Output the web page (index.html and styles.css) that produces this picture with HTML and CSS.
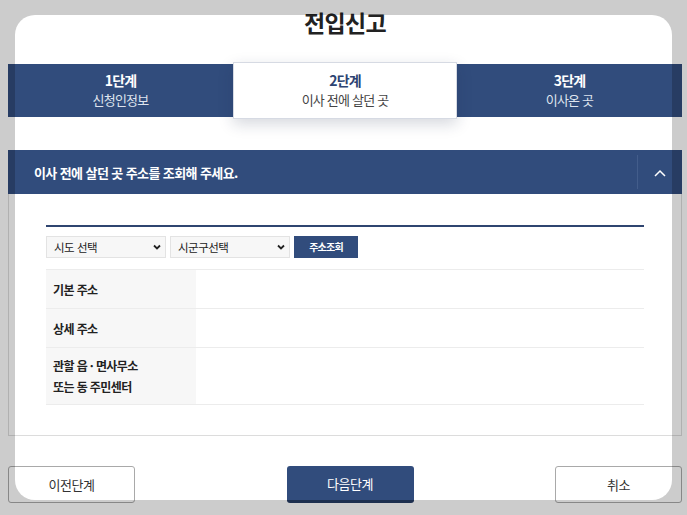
FILE: index.html
```html
<!DOCTYPE html>
<html lang="ko">
<head>
<meta charset="utf-8">
<title>전입신고</title>
<link rel="stylesheet" href="styles.css">
</head>
<body>
<div class="page">
  <h1 class="title">전입신고</h1>
  <ol class="steps">
    <li class="step"><strong>1단계</strong><span>신청인정보</span></li>
    <li class="step active"><strong>2단계</strong><span>이사 전에 살던 곳</span></li>
    <li class="step"><strong>3단계</strong><span>이사온 곳</span></li>
  </ol>
  <section class="panel">
    <div class="panel-head">
      <h2>이사 전에 살던 곳 주소를 조회해 주세요.</h2>
      <button class="toggle" type="button" aria-label="접기">
        <svg width="12" height="8" viewBox="0 0 12 8"><path d="M1 7 L6 2 L11 7" fill="none" stroke="#fff" stroke-width="1.5"/></svg>
      </button>
    </div>
    <div class="panel-body">
      <div class="search">
        <div class="select sido"><span>시도 선택</span><svg width="8" height="6" viewBox="0 0 8 6"><path d="M1 1.5 L4 4.5 L7 1.5" fill="none" stroke="#222" stroke-width="1.8"/></svg></div>
        <div class="select sigungu"><span>시군구선택</span><svg width="8" height="6" viewBox="0 0 8 6"><path d="M1 1.5 L4 4.5 L7 1.5" fill="none" stroke="#222" stroke-width="1.8"/></svg></div>
        <button class="btn-search" type="button">주소조회</button>
      </div>
      <div class="table">
        <div class="row r1"><div class="th">기본 주소</div><div class="td"></div></div>
        <div class="row r2"><div class="th">상세 주소</div><div class="td"></div></div>
        <div class="row r3"><div class="th">관할 읍 · 면사무소<br>또는 동 주민센터</div><div class="td"></div></div>
      </div>
    </div>
  </section>
  <div class="actions">
    <button class="btn btn-line" type="button">이전단계</button>
    <button class="btn btn-primary" type="button">다음단계</button>
    <button class="btn btn-line" type="button">취소</button>
  </div>
</div>
<div class="dim" aria-hidden="true"></div>
</body>
</html>
```
FILE: styles.css
```css
* { box-sizing: border-box; }
html, body { margin: 0; padding: 0; height: 100%; overflow: hidden; background: #fff; }
body {
  font-family: "Noto Sans CJK KR", "Noto Sans", sans-serif;
  color: #222;
  position: relative;
}
.page {
  width: 674px;
  margin-left: 8px;
}
.title {
  margin: 0;
  height: 64px;
  line-height: 45px;
  text-align: center;
  font-size: 23px;
  font-weight: 700;
  letter-spacing: -0.6px;
  color: #222;
}
.steps {
  list-style: none;
  margin: 0 0 33px;
  padding: 0;
  display: grid;
  grid-template-columns: 225px 224px 225px;
  height: 53px;
  background: #314c7c;
}
.step {
  display: flex;
  flex-direction: column;
  justify-content: center;
  align-items: center;
  color: #fff;
  letter-spacing: -0.8px;
  padding-bottom: 2px;
}
.step strong { font-size: 14px; font-weight: 700; line-height: 20px; }
.step span { font-size: 13px; line-height: 19px; color: #dfe4ee; }
.step.active {
  background: #fff;
  margin: -2px 0;
  border: 1px solid #d6dae3;
  box-shadow: 0 5px 14px rgba(30, 40, 70, 0.18);
  position: relative;
  z-index: 1;
}
.step.active strong { color: #2c4372; }
.step.active span { color: #444; }

.panel-head {
  height: 44px;
  background: #314c7c;
  display: flex;
  align-items: center;
  justify-content: space-between;
  padding-left: 26px;
}
.panel-head h2 {
  margin: 0;
  font-size: 13px;
  font-weight: 700;
  color: #fff;
  letter-spacing: -0.6px;
}
.toggle {
  width: 45px;
  height: 34px;
  border: 0;
  border-left: 1px solid #435d8b;
  background: transparent;
  padding: 1px 0 0;
  display: flex;
  align-items: center;
  justify-content: center;
}
.panel-body {
  border: 1px solid #dcdcdc;
  border-top: 0;
  padding: 31px 37px 30px;
}
.search {
  border-top: 2px solid #2f4570;
  padding-top: 9px;
  display: flex;
  gap: 4px;
  height: 44px;
}
.select {
  height: 22px;
  background: #f7f7f7;
  border: 1px solid #e3e3e3;
  display: flex;
  align-items: center;
  justify-content: space-between;
  padding: 0 4px 0 7px;
  font-size: 11.5px;
  letter-spacing: -0.5px;
  color: #222;
}
.sido { width: 120px; }
.sigungu { width: 120px; }
.btn-search {
  height: 22px;
  width: 64px;
  border: 0;
  background: #314c7c;
  color: #fff;
  font-family: inherit;
  font-size: 10px;
  font-weight: 700;
  letter-spacing: -0.8px;
  padding: 0 0 2px;
}
.table {
  border-top: 1px solid #ececec;
}
.row {
  display: flex;
  border-bottom: 1px solid #ececec;
}
.r1 { height: 39px; }
.r2 { height: 39px; }
.r3 { height: 57px; }
.th {
  width: 150px;
  background: #f7f7f7;
  font-size: 12px;
  font-weight: 700;
  letter-spacing: -0.6px;
  line-height: 21px;
  padding-left: 7px;
  display: flex;
  align-items: center;
  color: #222;
}
.td { flex: 1; }
.actions {
  margin-top: 30px;
  display: flex;
  justify-content: space-between;
  align-items: flex-start;
}
.btn {
  width: 127px;
  height: 37px;
  font-family: inherit;
  font-size: 13px;
  letter-spacing: -0.5px;
  border-radius: 3px;
  padding: 0;
}
.btn-line {
  background: #fff;
  border: 1px solid #a9a9a9;
  color: #333;
}
.btn-primary {
  background: #314c7c;
  border: 0;
  border-bottom: 3px solid #253b63;
  color: #fff;
  margin-left: 10px;
}
.dim {
  position: absolute;
  left: 15px;
  top: 15px;
  width: 657px;
  height: 485px;
  border-radius: 20px;
  box-shadow: 0 0 0 1200px rgba(0, 0, 0, 0.2);
  pointer-events: none;
  z-index: 5;
}
```
